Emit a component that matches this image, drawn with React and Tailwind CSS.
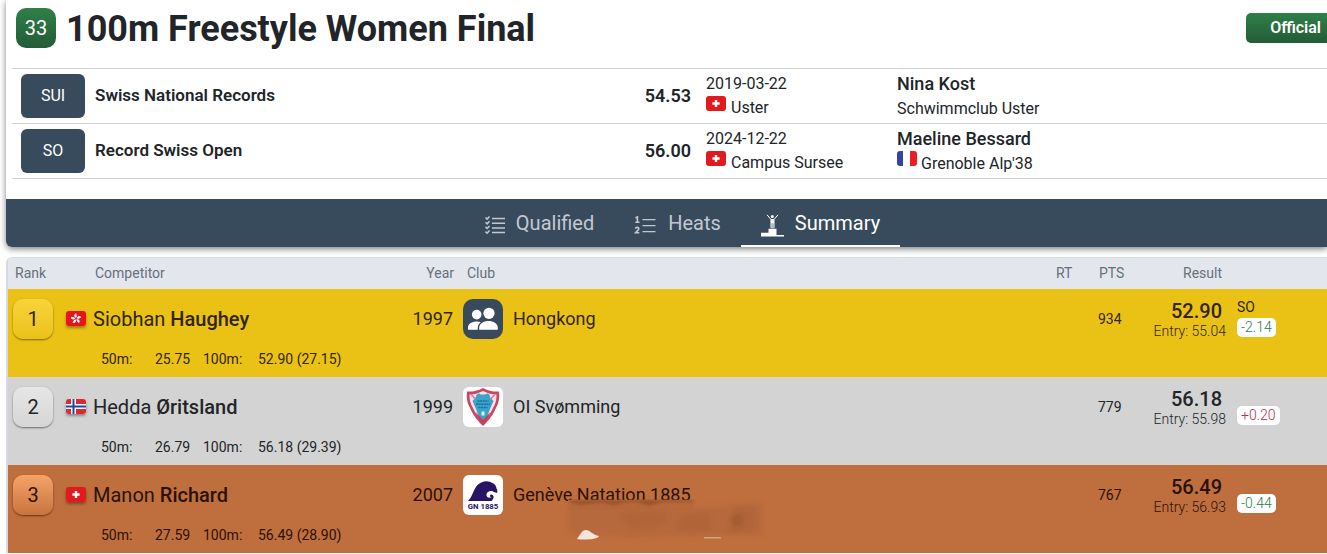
import React from "react";

function Flag({ code, shadow }) {
  const cls = shadow
    ? "mb-0.5 block h-[15px] w-5 shrink-0 rounded-[3px] shadow-[0_2px_3px_rgba(0,0,0,0.35)]"
    : "block h-[15px] w-5 shrink-0 rounded-[3px]";
  return (
    <svg viewBox="0 0 20 15" className={cls} role="img" aria-label={code}>
      {code === "SUI" && (
        <>
          <rect width="20" height="15" fill="#e01a1f" />
          <path d="M8.8 4h2.4v2.3h2.4v2.4h-2.4V11H8.8V8.7H6.4V6.3h2.4z" fill="#fff" />
        </>
      )}
      {code === "FRA" && (
        <>
          <rect width="20" height="15" fill="#fff" />
          <rect width="6" height="15" fill="#3743a0" />
          <rect x="13" width="7" height="15" fill="#ec1c24" />
        </>
      )}
      {code === "NOR" && (
        <>
          <rect width="20" height="15" fill="#dd2a30" />
          <path d="M5 0h5v15H5zM0 5h20v5H0z" fill="#fff" />
          <path d="M6.5 0h2v15h-2zM0 6.5h20v2H0z" fill="#26469a" />
        </>
      )}
      {code === "HKG" && (
        <>
          <rect width="20" height="15" fill="#e8141c" />
          <g fill="#fff" transform="translate(10 7.7)">
            {[0, 72, 144, 216, 288].map((a) => (
              <path key={a} transform={`rotate(${a})`} d="M0 -0.8C-2.4 -2 -2.2 -4.8 0.4 -5.4C-0.3 -4.3 1.9 -3.4 0 -0.8z" />
            ))}
          </g>
        </>
      )}
    </svg>
  );
}

function QualifiedIcon() {
  return (
    <svg viewBox="0 0 20 18" className="h-[18px] w-5" fill="none" stroke="currentColor" strokeWidth="1.5" aria-hidden="true">
      <path d="M7 2.5h13M7 7.2h13M7 11.9h13M7 16.6h13" />
      <path d="M.5 1.5l1.6 1.6L4.5.5M.5 6.2l1.6 1.6 2.4-2.6M.5 10.9l1.6 1.6 2.4-2.6M.5 15.6l1.6 1.6 2.4-2.6" />
    </svg>
  );
}

function HeatsIcon() {
  return (
    <svg viewBox="0 0 23 18" className="h-[18px] w-[23px]" fill="none" stroke="currentColor" strokeWidth="1.4" aria-hidden="true">
      <path d="M8.500 3.600h13M8.500 9.600h13M8.500 15.600h13" />
      <path d="M1.500 2l1.900-1.100V6M1.300 6.200h4.200" strokeWidth="1.600" />
      <path d="M1.400 12.700c.3-1.900 3.600-1.700 3.400.2-.1 1.300-2 2.300-3.300 3.900h3.800" strokeWidth="1.600" />
    </svg>
  );
}

function PodiumIcon() {
  return (
    <svg viewBox="0 0 23 23" className="h-[23px] w-[23px]" fill="currentColor" aria-hidden="true">
      <path d="M0 18.800h7.500v-4.100h8V21H23v1.500H0z" />
      <circle cx="11.300" cy="2.400" r="1.500" />
      <path d="M6 .8l4 4.700v8.400M17 .8l-4 4.700v8.400" fill="none" stroke="currentColor" strokeWidth="1" />
      <path d="M9.900 5h3v4.500h-3z" />
      <path d="M10.300 9.500h2.200v5h-2.200z" opacity=".6" />
    </svg>
  );
}

function ClubLogo({ kind }) {
  if (kind === "group")
    return (
      <svg viewBox="0 0 40 40" className="size-10 shrink-0 rounded-[10px] bg-[#384b5d]" fill="#fff" aria-hidden="true">
        <circle cx="13.7" cy="15.6" r="4.8" />
        <path d="M5 30.8v-2.1c0-4 4-6.2 8.700-6.200 1.500 0 2.900.2 4.100.7-2 1.500-3.100 3.500-3.100 5.900v1.700z" />
        <circle cx="26" cy="14.300" r="5.600" />
        <path d="M16.200 30.800v-2.100c0-4.200 4.600-6.700 9.300-6.700s9.300 2.500 9.300 6.700v2.100z" />
      </svg>
    );
  if (kind === "shield")
    return (
      <svg viewBox="0 0 40 40" className="size-10 shrink-0 rounded-md bg-white" aria-hidden="true">
        <path d="M4 4.500C9 5 14 4 20 1c6 3 11 4 16 3.500.8 7-.4 12-3.300 17-2.500 6-6 11-12.700 17.500C13.300 32.500 9.800 27.500 7.300 21.500 4.400 16.500 3.200 11.500 4 4.500z" fill="#cc4563" />
        <path d="M6.500 7.500C11 7.500 15 6.500 20 4c5 2.500 9 3.500 13.500 3.500.2 5-1 9.500-3.500 13.500-2 5-5 9-10 14-5-5-8-9-10-14C7.500 17 6.300 12.500 6.500 7.500z" fill="#f6e3e9" />
        <path d="M13 10c0-3 3-4.500 4.500-2.500h5C24 5.500 27 7 27 10l3.500 4-3.500 8-3 8-4 4-4-4-3-8-3.500-8z" fill="#3aa3c9" />
        <path d="M8 7.500c2 1 2.500 3.500 4.500 4.500M32 7.500c-2 1-2.500 3.500-4.500 4.500" fill="none" stroke="#dd7d93" strokeWidth="1.500" />
        <path d="M14.500 14h11M13 17.200h14M15.500 20.400h9" stroke="#1f6f9f" strokeWidth="1.500" strokeDasharray="2 .6" />
        <path d="M18.500 24.500h3v4h-3z" fill="#d9f2fa" />
        <path d="M12.500 25c2 5 4.500 8.500 7.500 12 3-3.500 5.500-7 7.500-12L20 33z" fill="#cc3b55" />
      </svg>
    );
  return (
    <svg viewBox="0 0 40 40" className="size-10 shrink-0 rounded-md bg-white" aria-hidden="true">
      <path d="M5 26C9.500 21.500 10 15.500 14 10.500 18 6 25 4.500 30 8.300c2.200 1.200 3.300 3.200 3.700 5.700.8 1 .9 2.300.3 3.900l-3-.8c-2-2.300-7.500-1.200-7.600 2.700-.1 3 3.600 3.800 5.100 2.200-1 .1-2-.6-1.500-1.800 1.200-1.500 4.200.1 3.500 2.500-.6 2-1.500 2.700-2 3.300z" fill="#281464" />
      <text x="20" y="33.500" textAnchor="middle" fontSize="7.800" fontWeight="700" fontFamily="Roboto, sans-serif" fill="#281464">GN 1885</text>
    </svg>
  );
}

const records = [
  { code: "SUI", title: "Swiss National Records", time: "54.53", date: "2019-03-22", place: "Uster", name: "Nina Kost", club: "Schwimmclub Uster" },
  { code: "SO", title: "Record Swiss Open", time: "56.00", date: "2024-12-22", place: "Campus Sursee", name: "Maeline Bessard", club: "Grenoble Alp'38", clubFlag: "FRA" },
];

const results = [
  {
    rank: 1, flag: "HKG", first: "Siobhan", last: "Haughey", year: 1997, logo: "group", club: "Hongkong", pts: 934,
    result: "52.90", entry: "55.04", tag: "SO", diff: "-2.14", s50: "25.75", s100: "52.90 (27.15)",
    row: "bg-[#eac216] text-[#33240a]", badge: "from-[#f8d43a] to-[#eac216]", diffColor: "text-[#2f7a5a]",
  },
  {
    rank: 2, flag: "NOR", first: "Hedda", last: "Øritsland", year: 1999, logo: "shield", club: "OI Svømming", pts: 779,
    result: "56.18", entry: "55.98", tag: "", diff: "+0.20", s50: "26.79", s100: "56.18 (29.39)",
    row: "bg-[#d3d3d3] text-[#212529]", badge: "from-[#e6e6e6] to-[#d6d6d6]", diffColor: "text-[#b8323f]",
  },
  {
    rank: 3, flag: "SUI", first: "Manon", last: "Richard", year: 2007, logo: "wave", club: "Genève Natation 1885", pts: 767,
    result: "56.49", entry: "56.93", tag: "", diff: "-0.44", s50: "27.59", s100: "56.49 (28.90)", smudge: true,
    row: "bg-[#bf6e3d] text-[#2b1208]", badge: "from-[#f5a468] to-[#c8743f]", diffColor: "text-[#2c8046]",
  },
];

function Smudge() {
  return (
    <svg viewBox="0 0 210 50" className="pointer-events-none absolute top-[34px] left-[108px] h-[50px] w-[210px]" aria-hidden="true">
      <defs>
        <filter id="soft" x="-10%" y="-30%" width="120%" height="160%"><feGaussianBlur stdDeviation="2.5" /></filter>
        <filter id="mid" x="-10%" y="-60%" width="120%" height="220%"><feGaussianBlur stdDeviation="1.6" /></filter>
        <filter id="edge"><feGaussianBlur stdDeviation="0.7" /></filter>
      </defs>
      <path d="M5 .8h126v10H5z" fill="#b96a3a" filter="url(#edge)" />
      <path d="M6 1h124v2h-30l-14 4-14-4-12 1-10 3-10-3-12 1-10 2-10-3z" fill="#7d3d1c" opacity=".5" filter="url(#mid)" />
      <g filter="url(#soft)">
        <path d="M5 6h60l60 4 74-6v32h-49l-80 2-65-4z" fill="#b1663a" opacity=".6" />
        <path d="M56 16l30-4 20 3-6 12-32 2zM118 14h30v18h-34zM170 8h22l-2 24-24 2z" fill="#a35c34" opacity=".35" />
        <circle cx="174" cy="21" r="6" fill="#925027" opacity=".4" />
      </g>
      <path d="M14 40c3-4 5-9 9-9s7 5 13 6c-2 4-16 4-22 3z" fill="#f6e6da" filter="url(#edge)" />
      <path d="M141 38h17v1.5h-17z" fill="#d0a583" />
    </svg>
  );
}

function Tab({ icon, label, active }) {
  return (
    <button
      type="button"
      role="tab"
      aria-selected={active}
      className={
        active
          ? "flex h-12 items-center gap-[11px] border-b-2 border-white px-5 pt-0.5 text-white"
          : "flex h-12 items-center gap-[11px] border-b-2 border-transparent px-5 pt-0.5 text-[#c1c9d0]"
      }
    >
      <span className="pt-1">{icon}</span>
      <span>{label}</span>
    </button>
  );
}

export default function App() {
  return (
    <div className="overflow-hidden bg-white pl-1.5 font-[Roboto,sans-serif] text-[#212529]">
      <main>
        <section className="rounded-bl-md bg-white shadow-[0_2px_6px_rgba(0,0,0,0.5)]">
          <header className="flex h-[68px] items-start justify-between pt-2 pl-2.5">
            <div className="flex items-start gap-2.5">
              <span className="flex size-10 items-center justify-center rounded-[10px] bg-linear-to-b from-[#2f8049] to-[#235c37] text-xl text-white">33</span>
              <h1 className="text-4xl leading-[42px] font-bold">100m Freestyle Women Final</h1>
            </div>
            <span className="mt-[5px] rounded-l-[5px] bg-linear-to-b from-[#2f8049] to-[#235c37] py-[3px] pr-1.5 pl-6 text-base leading-6 font-semibold text-white">Official</span>
          </header>

          <div className="pl-1.5">
            <table className="w-full table-fixed border-collapse">
              <colgroup>
                <col className="w-[83px]" />
                <col className="w-[477px]" />
                <col className="w-[134px]" />
                <col className="w-[191px]" />
                <col />
              </colgroup>
              <tbody>
                {records.map((r) => (
                  <tr key={r.code} className="h-[55px] border-y border-[#cfd2d5]">
                    <td className="pl-[9px]">
                      <span className="flex h-11 w-16 items-center justify-center rounded-md bg-[#384b5d] text-base text-white">{r.code}</span>
                    </td>
                    <td className="text-[17px] font-semibold">{r.title}</td>
                    <td className="pr-[15px] text-right text-lg font-semibold">{r.time}</td>
                    <td className="text-base leading-6">
                      <div>{r.date}</div>
                      <div className="flex gap-[5px]">
                        <Flag code="SUI" />
                        <span>{r.place}</span>
                      </div>
                    </td>
                    <td className="text-base leading-6">
                      <div className="text-lg leading-6 font-medium">{r.name}</div>
                      <div className="flex gap-1">
                        {r.clubFlag && <Flag code={r.clubFlag} />}
                        <span className="pt-0.5 leading-[22px]">{r.club}</span>
                      </div>
                    </td>
                  </tr>
                ))}
              </tbody>
            </table>
          </div>

          <nav role="tablist" aria-label="Event views" className="mt-5 flex h-12 justify-center rounded-bl-md bg-[#384b5d] pl-8 text-xl">
            <Tab icon={<QualifiedIcon />} label="Qualified" active={false} />
            <Tab icon={<HeatsIcon />} label="Heats" active={false} />
            <Tab icon={<PodiumIcon />} label="Summary" active />
          </nav>
        </section>

        <section className="mt-2.5 rounded-tl-md border-t border-l-2 border-[#d5dae3]">
          <table className="w-full table-fixed border-collapse">
            <colgroup>
              <col className="w-[58px]" />
              <col className="w-[327px]" />
              <col className="w-[62px]" />
              <col />
              <col className="w-[42px]" />
              <col className="w-[48px]" />
              <col className="w-[80px]" />
              <col className="w-[101px]" />
            </colgroup>
            <thead>
              <tr className="h-[31px] bg-[#e3e7ed] text-left text-sm text-[#66707c]">
                <th scope="col" className="pb-0.5 pl-[7px] font-normal">Rank</th>
                <th scope="col" className="pb-0.5 pl-[29px] font-normal">Competitor</th>
                <th scope="col" className="pr-px pb-0.5 text-right font-normal">Year</th>
                <th scope="col" className="pb-0.5 pl-3 font-normal">Club</th>
                <th scope="col" className="pb-0.5 font-normal">RT</th>
                <th scope="col" className="pb-0.5 pl-px font-normal">PTS</th>
                <th scope="col" className="pr-1 pb-0.5 text-right font-normal">Result</th>
                <td></td>
              </tr>
            </thead>
            <tbody>
              {results.map((r) => (
                <tr key={r.rank} className={`h-[88px] align-top ${r.row}`}>
                  <td className="pt-2.5 pl-[5px]">
                    <span className={`flex size-10 items-center justify-center rounded-[10px] bg-linear-to-b text-xl shadow-[0_1px_2px_rgba(0,0,0,0.5)] ${r.badge}`}>{r.rank}</span>
                  </td>
                  <td className="pt-2.5">
                    <div className="flex h-10 items-center gap-[7px] text-xl">
                      <Flag code={r.flag} shadow />
                      <span>{r.first} <span className="font-medium">{r.last}</span></span>
                    </div>
                    <div className="flex h-[38px] items-center pt-0.5 pl-[35px] text-sm">
                      <span className="w-[54px]">50m:</span>
                      <span className="w-12">{r.s50}</span>
                      <span className="w-[55px]">100m:</span>
                      <span>{r.s100}</span>
                    </div>
                  </td>
                  <td className="pt-2.5 pr-0.5 text-right text-lg leading-10">{r.year}</td>
                  <td className="relative pt-2.5 pl-2">
                    <div className="flex h-10 items-center gap-2.5 text-lg">
                      <ClubLogo kind={r.logo} />
                      <span>{r.club}</span>
                    </div>
                    {r.smudge && <Smudge />}
                  </td>
                  <td></td>
                  <td className="pt-2.5 text-sm leading-10">{r.pts}</td>
                  <td className="pt-2.5 text-right whitespace-nowrap">
                    <div className="pr-1 text-xl leading-6 font-medium">{r.result}</div>
                    <div className="text-sm leading-4 font-light">Entry: {r.entry}</div>
                  </td>
                  <td className="pt-2.5 pl-[11px] text-sm">
                    <div className="h-[18px] leading-4">{r.tag}</div>
                    <span className={`inline-block rounded-[5px] bg-white px-1 leading-[19px] font-light ${r.diffColor}`}>{r.diff}</span>
                  </td>
                </tr>
              ))}
            </tbody>
          </table>
        </section>
      </main>
    </div>
  );
}
